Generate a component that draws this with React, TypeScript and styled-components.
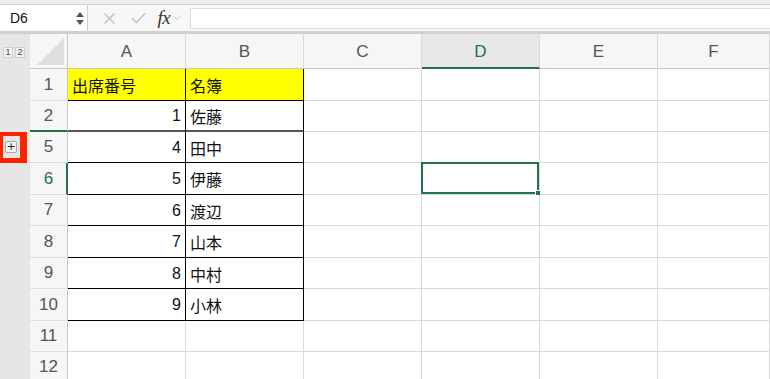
import React from 'react';
import styled, { createGlobalStyle, css } from 'styled-components';

const GREEN = '#217346';

const Global = createGlobalStyle`
  html, body { margin: 0; padding: 0; background: #ffffff; overflow: hidden; }
  body { font-family: "Liberation Sans", "Noto Sans CJK JP", sans-serif; }
  * { box-sizing: border-box; }
`;

const Page = styled.div`
  width: 770px;
  height: 379px;
  display: flex;
  flex-direction: column;
  overflow: hidden;
  background: #fff;
`;

const TopStrip = styled.div`
  height: 5px;
  background: #ededed;
  border-bottom: 1px solid #d4d4d4;
  flex: none;
`;

const FormulaBar = styled.div`
  height: 29px;
  flex: none;
  display: flex;
  align-items: stretch;
  background: #f7f7f7;
  border-bottom: 3px solid #d0d0d0;
`;

const NameBox = styled.div`
  width: 88px;
  background: #fff;
  border-right: 1px solid #d0d0d0;
  display: flex;
  align-items: center;
  justify-content: space-between;
  padding: 0 3px 0 10px;
  font-size: 14px;
  color: #111;
`;

const Spinner = styled.div`
  display: flex;
  flex-direction: column;
  gap: 3px;
  align-items: center;
`;

const Tri = styled.div<{ $down?: boolean }>`
  width: 0;
  height: 0;
  border-left: 4px solid transparent;
  border-right: 4px solid transparent;
  ${(p) =>
    p.$down
      ? css`border-top: 5px solid #555;`
      : css`border-bottom: 5px solid #555;`}
`;

const Icons = styled.div`
  display: flex;
  align-items: center;
  padding-left: 15px;
  width: 102px;
  flex: none;
`;

const IconSlot = styled.div<{ $w: number }>`
  width: ${(p) => p.$w}px;
  display: flex;
  align-items: center;
  justify-content: flex-start;
`;

const Fx = styled.span`
  font-family: "Liberation Serif", serif;
  font-style: italic;
  font-size: 19px;
  color: #333;
  letter-spacing: -0.5px;
`;

const FormulaInput = styled.div`
  flex: 1;
  margin: 3px 0 2px 0;
  background: #fff;
  border: 1px solid #dcdcdc;
  border-right: none;
`;

const Sheet = styled.div`
  flex: 1;
  display: grid;
  grid-template-columns: 30px 38px repeat(5, 118px) 1fr;
  grid-template-rows: 35px 32px 31px 31px 32px 31px 32px 31px 32px 31px 31px;
  background: #fff;
`;

const Gutter = styled.div`
  background: #e6e6e6;
`;

const Levels = styled.div`
  display: flex;
  gap: 2px;
  padding: 13px 0 0 3px;
`;

const LevelBtn = styled.div`
  width: 10px;
  height: 11px;
  background: #f2f2f2;
  border: 1px solid #cfcfcf;
  font-size: 9px;
  line-height: 9px;
  text-align: center;
  color: #444;
`;

const RedMark = styled.div`
  width: 27px;
  height: 100%;
  background: #e6e6e6;
  border-style: solid;
  border-color: #ff2200;
  border-width: 4px 7px 5px 3px;
  display: flex;
  align-items: center;
  padding-left: 2px;
`;

const PlusBox = styled.div`
  width: 12px;
  height: 12px;
  background: #f4f4f4;
  border: 1px solid #a8a8a8;
  border-radius: 2px;
  font-size: 11px;
  line-height: 9px;
  text-align: center;
  color: #222;
  font-family: "DejaVu Sans", sans-serif;
`;

const Corner = styled.div`
  background: #f6f6f6;
  border-right: 1px solid #c8c8c8;
  border-bottom: 1px solid #c8c8c8;
  display: flex;
  align-items: flex-end;
  justify-content: flex-end;
  padding: 0 3px 3px 0;
`;

const CornerTri = styled.div`
  width: 27px;
  height: 27px;
  background: #dedede;
  clip-path: polygon(100% 0, 100% 100%, 0 100%);
`;

const ColHead = styled.div<{ $sel?: boolean }>`
  background: ${(p) => (p.$sel ? '#e8e8e8' : '#f6f6f6')};
  border-right: 1px solid #d9d9d9;
  border-bottom: ${(p) => (p.$sel ? `2px solid ${GREEN}` : '1px solid #c8c8c8')};
  display: flex;
  align-items: center;
  justify-content: center;
  padding-top: ${(p) => (p.$sel ? '2px' : '1px')};
  font-size: 17px;
  color: ${(p) => (p.$sel ? GREEN : '#555')};
`;

const RowHead = styled.div<{ $sel?: boolean; $hiddenBelow?: boolean }>`
  background: #f6f6f6;
  border-right: ${(p) => (p.$sel ? `2px solid ${GREEN}` : '1px solid #c8c8c8')};
  border-bottom: ${(p) => (p.$hiddenBelow ? `2px solid ${GREEN}` : '1px solid #dedede')};
  display: flex;
  align-items: center;
  justify-content: center;
  padding-left: ${(p) => (p.$sel ? '1px' : '0')};
  font-size: 17px;
  color: ${(p) => (p.$sel ? GREEN : '#555')};
`;

const Cell = styled.div<{ $table?: boolean; $yellow?: boolean; $right?: boolean; $hiddenBelow?: boolean }>`
  position: relative;
  background: ${(p) => (p.$yellow ? '#ffff00' : '#fff')};
  border-right: 1px solid ${(p) => (p.$table ? '#000' : '#dadada')};
  border-bottom: ${(p) =>
    p.$hiddenBelow && p.$table ? '2px solid #555' : `1px solid ${p.$table ? '#000' : '#dadada'}`};
  display: flex;
  align-items: center;
  justify-content: ${(p) => (p.$right ? 'flex-end' : 'flex-start')};
  padding: 1px 4px 0 4px;
  font-size: 16px;
  color: #111;
  white-space: nowrap;
`;

const Selection = styled.div`
  position: absolute;
  left: -1px;
  top: -1px;
  right: 0;
  bottom: 0;
  border: 2px solid ${GREEN};
  pointer-events: none;
`;

const Handle = styled.div`
  position: absolute;
  right: -4px;
  bottom: -4px;
  width: 6px;
  height: 6px;
  background: ${GREEN};
  border: 1px solid #fff;
`;

type Row = { n: string; a?: string; b?: string; head?: boolean; sel?: boolean; hidden?: boolean };

const rows: Row[] = [
  { n: '1', a: '出席番号', b: '名簿', head: true },
  { n: '2', a: '1', b: '佐藤', hidden: true },
  { n: '5', a: '4', b: '田中' },
  { n: '6', a: '5', b: '伊藤', sel: true },
  { n: '7', a: '6', b: '渡辺' },
  { n: '8', a: '7', b: '山本' },
  { n: '9', a: '8', b: '中村' },
  { n: '10', a: '9', b: '小林' },
  { n: '11' },
  { n: '12' },
];

const cols = ['A', 'B', 'C', 'D', 'E', 'F'];

export default function App() {
  return (
    <Page>
      <Global />
      <TopStrip />
      <FormulaBar>
        <NameBox>
          <span>D6</span>
          <Spinner>
            <Tri />
            <Tri $down />
          </Spinner>
        </NameBox>
        <Icons>
          <IconSlot $w={28}>
            <svg width="13" height="13" viewBox="0 0 13 13">
              <path d="M1.5 1.5 L11.5 11.5 M11.5 1.5 L1.5 11.5" stroke="#c4c4c4" strokeWidth="1.6" fill="none" />
            </svg>
          </IconSlot>
          <IconSlot $w={27}>
            <svg width="15" height="12" viewBox="0 0 15 12">
              <path d="M1 6.5 L5.5 10.5 L14 1.5" stroke="#c4c4c4" strokeWidth="1.6" fill="none" />
            </svg>
          </IconSlot>
          <IconSlot $w={33}>
            <Fx>fx</Fx>
            <svg width="8" height="6" viewBox="0 0 8 6" style={{ marginLeft: 3 }}>
              <path d="M1 1.5 L4 4.5 L7 1.5" stroke="#c4c4c4" strokeWidth="1" fill="none" />
            </svg>
          </IconSlot>
        </Icons>
        <FormulaInput />
      </FormulaBar>
      <Sheet>
        <Gutter>
          <Levels>
            <LevelBtn>1</LevelBtn>
            <LevelBtn>2</LevelBtn>
          </Levels>
        </Gutter>
        <Corner>
          <CornerTri />
        </Corner>
        {cols.map((c) => (
          <ColHead key={c} $sel={c === 'D'}>
            {c}
          </ColHead>
        ))}
        {rows.map((r) => (
          <React.Fragment key={r.n}>
            <Gutter>
              {r.n === '5' && (
                <RedMark>
                  <PlusBox>+</PlusBox>
                </RedMark>
              )}
            </Gutter>
            <RowHead $sel={r.sel} $hiddenBelow={r.hidden}>
              {r.n}
            </RowHead>
            <Cell $table={r.a !== undefined} $yellow={r.head} $right={!r.head} $hiddenBelow={r.hidden}>
              {r.a}
            </Cell>
            <Cell $table={r.b !== undefined} $yellow={r.head} $hiddenBelow={r.hidden}>
              {r.b}
            </Cell>
            <Cell />
            <Cell>
              {r.sel && (
                <Selection>
                  <Handle />
                </Selection>
              )}
            </Cell>
            <Cell />
            <Cell />
          </React.Fragment>
        ))}
      </Sheet>
    </Page>
  );
}
